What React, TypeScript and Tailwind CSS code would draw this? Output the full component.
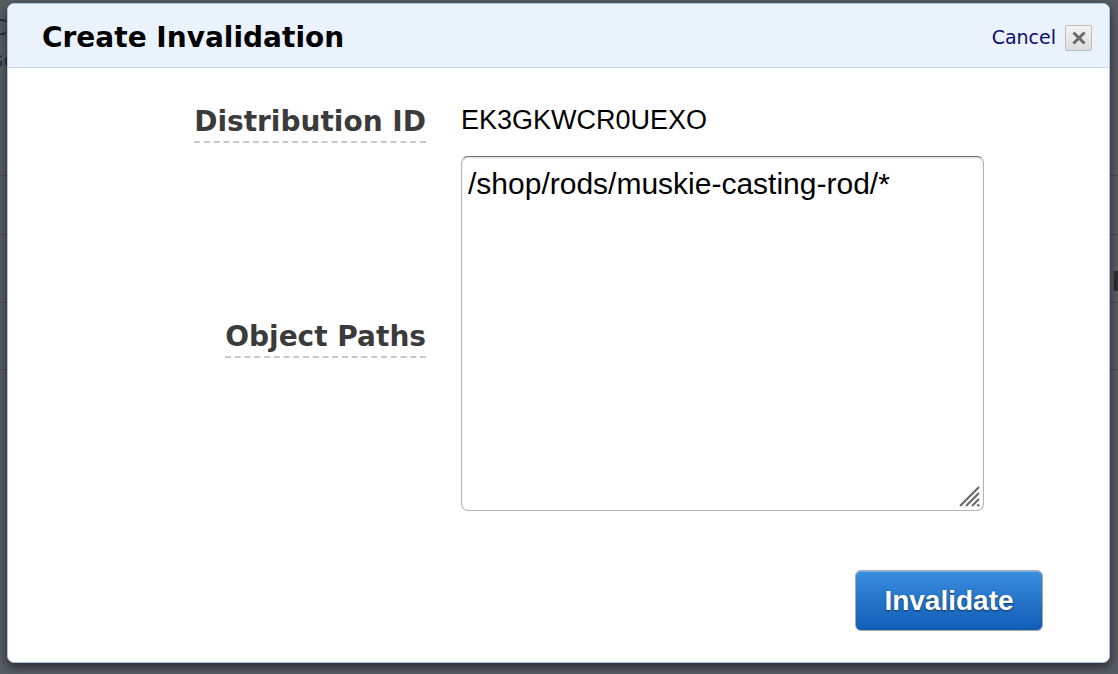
import React from 'react';

// Dimmed page that sits behind the modal
const Backdrop: React.FC = () => (
  <div className="absolute inset-0 flex flex-col bg-[#575c61] text-[#2a2d30] font-['DejaVu_Sans',sans-serif]">
    <div className="h-[176px] pt-[12px] text-[22px] leading-[32px] border-b border-[#46494d]">
      <div className="-ml-[8px]">Co</div>
      <div className="-ml-[8px]">se</div>
    </div>
    <div className="h-[59px] border-b border-[#46494d]" />
    <div className="h-[68px] border-b border-[#46494d] flex justify-end items-end">
      <span className="text-[26px] font-bold -mr-[12px] leading-[40px]">ab</span>
    </div>
    <div className="h-[67px] border-b border-[#46494d]" />
  </div>
);

export default function App() {
  return (
    <div className="relative w-[1118px] h-[674px] overflow-hidden">
      <Backdrop />

      {/* Modal */}
      <div className="absolute left-[7px] top-[3px] w-[1103px] h-[660px] rounded-[7px] bg-white border border-[#a8c5e6] shadow-[0_4px_10px_rgba(0,0,0,0.55)] flex flex-col overflow-hidden">
        <div className="h-[64px] shrink-0 bg-[#eaf2fc] border-b border-[#c4daf1] flex items-center justify-between pl-[34px] pr-[17px] pt-[4px]">
          <h1 className="font-['DejaVu_Sans',sans-serif] font-bold text-[28px] text-black leading-none">
            Create Invalidation
          </h1>
          <div className="flex items-center gap-[9px]">
            <a className="font-['DejaVu_Sans',sans-serif] text-[19px] text-[#0c0c6e] leading-none">Cancel</a>
            <button className="w-[27px] h-[26px] rounded-[2px] border border-[#bdbdbd] bg-gradient-to-b from-[#f4f4f4] to-[#dcdcdc] flex items-center justify-center">
              <svg width="14" height="14" viewBox="0 0 14 14">
                <path d="M2.5 2.5 L11.5 11.5 M11.5 2.5 L2.5 11.5" stroke="#6b6b6b" strokeWidth="3" strokeLinecap="square" />
              </svg>
            </button>
          </div>
        </div>

        <div className="flex-1 flex flex-col">
          <div className="grid grid-cols-[418px_1fr] gap-x-[35px] pt-[38px]">
            <div className="flex justify-end">
              <span className="font-['DejaVu_Sans',sans-serif] font-bold text-[28px] text-[#3b3b3b] leading-[32px] pb-[3px] border-b-2 border-dashed border-[#c9c9c9]">
                Distribution ID
              </span>
            </div>
            <div className="font-['Liberation_Sans',Arial,sans-serif] text-[27px] text-black leading-[32px] -mt-[2px]">
              EK3GKWCR0UEXO
            </div>

            <div className="flex justify-end items-center mt-[13px] pt-[12px]">
              <span className="font-['DejaVu_Sans',sans-serif] font-bold text-[28px] text-[#3b3b3b] leading-[32px] pb-[3px] border-b-2 border-dashed border-[#c9c9c9]">
                Object Paths
              </span>
            </div>
            <div className="mt-[13px] relative w-[523px] h-[355px]">
              <textarea
                defaultValue="/shop/rods/muskie-casting-rod/*"
                className="block w-full h-full rounded-[7px] border border-[#b4b4b4] border-t-[#6e6e6e] shadow-[inset_0_1px_2px_rgba(0,0,0,0.15)] px-[6px] pt-[10px] font-['Liberation_Sans',Arial,sans-serif] text-[30px] leading-[34px] text-black outline-none resize-none"
              />
              {/* resize grip */}
              <svg className="absolute right-[3px] bottom-[3px] pointer-events-none" width="26" height="26" viewBox="0 0 26 26">
                <path d="M24 5 L5 24 M24 11 L11 24 M24 17 L17 24" stroke="#666" strokeWidth="2" />
                <path d="M24 22.5 L22.5 24" stroke="#666" strokeWidth="2.5" />
              </svg>
            </div>
          </div>

          <div className="mt-auto flex justify-end pr-[66px] pb-[31px]">
            <button className="w-[188px] h-[61px] rounded-[6px] border border-[#a9a9a9] bg-gradient-to-b from-[#3a8ddf] to-[#0f5db5] shadow-[inset_0_1px_0_rgba(255,255,255,0.3)] font-['Liberation_Sans',Arial,sans-serif] font-bold text-[28px] text-white [text-shadow:0_1px_2px_rgba(0,0,0,0.55)]">
              Invalidate
            </button>
          </div>
        </div>
      </div>
    </div>
  );
}
